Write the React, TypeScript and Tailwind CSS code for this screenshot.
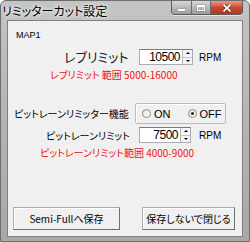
import React from 'react';

const jp = { fontFamily: '"Noto Sans CJK JP", sans-serif', fontFeatureSettings: '"palt"' };
const latin = { fontFamily: '"Liberation Sans", "Noto Sans CJK JP", sans-serif' };

function Spin({ value, width }: { value: string; width: string }) {
  return (
    <div className={`flex h-[16px] ${width} border border-[#abadb3] border-t-[#7a7a7a] bg-white`}>
      <div className="flex-1 whitespace-nowrap pr-[2px] text-right text-[12px] leading-[14px] tracking-[-0.5px] text-black" style={latin}>
        {value}
      </div>
      <div className="flex w-[10px] flex-col border-l border-[#b8b8b8] bg-[#f4f4f4]">
        <div className="flex flex-1 items-center justify-center border-b border-[#c8c8c8]">
          <div className="h-0 w-0 border-x-[2px] border-b-[2px] border-x-transparent border-b-black" />
        </div>
        <div className="flex flex-1 items-center justify-center">
          <div className="h-0 w-0 border-x-[2px] border-t-[2px] border-x-transparent border-t-black" />
        </div>
      </div>
    </div>
  );
}

function Radio({ checked }: { checked?: boolean }) {
  return (
    <div className="flex h-[9px] w-[9px] items-center justify-center rounded-full border border-[#8a8a8a] bg-gradient-to-br from-[#e0e0e0] to-white">
      {checked && <div className="h-[3px] w-[3px] rounded-full bg-[#222]" />}
    </div>
  );
}

function CaptionButtons() {
  return (
    <div className="mr-[6px] flex h-[14px] overflow-hidden rounded-b-[4px] border border-t-0 border-[#5a5a5a] shadow-[0_1px_0_rgba(255,255,255,0.6)]">
      <div className="flex w-[20px] items-center justify-center border-r border-[#6a6a6a] bg-gradient-to-b from-[#d8d8d8] to-[#9c9c9c]">
        <div className="mt-[4px] h-[2px] w-[7px] bg-white shadow-[0_0_1px_#333]" />
      </div>
      <div className="flex w-[19px] items-center justify-center border-r border-[#6a6a6a] bg-gradient-to-b from-[#d8d8d8] to-[#9c9c9c]">
        <div className="h-[6px] w-[8px] border-[1.5px] border-t-[2px] border-white shadow-[0_0_1px_#333]" />
      </div>
      <div className="flex w-[31px] items-center justify-center bg-gradient-to-b from-[#e89a88] via-[#c84a32] to-[#b8321c]">
        <svg width="10" height="8" viewBox="0 0 10 8">
          <path d="M1.5 0.5 L8.5 7.5 M8.5 0.5 L1.5 7.5" stroke="#5a1a10" strokeWidth="3" />
          <path d="M1.5 0.5 L8.5 7.5 M8.5 0.5 L1.5 7.5" stroke="#fff" strokeWidth="1.8" />
        </svg>
      </div>
    </div>
  );
}

export default function App() {
  return (
    <div className="flex h-[242px] w-[250px] flex-col overflow-hidden rounded-t-[6px] border border-[#6e6e6e] bg-gradient-to-b from-[#c4c4c4] via-[#b4b4b4] to-[#a8a8a8]">
      {/* title bar */}
      <div className="flex h-[19px] shrink-0 items-start justify-between">
        <div className="whitespace-nowrap pl-[1px] pt-[2px] text-[12px] leading-[15px] text-black [text-shadow:0_0_6px_#fff,0_0_3px_#fff]" style={jp}>
          リミッターカット設定
        </div>
        <CaptionButtons />
      </div>

      {/* client area */}
      <div className="mx-[6px] mb-[4px] flex flex-1 flex-col border border-[#808080] bg-[#f0f0f0] text-black">
        <div className="ml-[8px] mt-[9px] whitespace-nowrap text-[9px] leading-[10px]" style={latin}>
          MAP1
        </div>

        <div className="mt-[9px] flex items-center">
          <div className="ml-[56px] w-[75px] whitespace-nowrap text-[13px] leading-[16px] text-[#222]" style={jp}>
            レブリミット
          </div>
          <Spin value="10500" width="w-[54px]" />
          <div className="ml-[6px] whitespace-nowrap text-[10px]" style={latin}>RPM</div>
        </div>

        <div className="ml-[42px] mt-[3px] whitespace-nowrap text-[10px] leading-[13px] text-[#f01010]" style={jp}>
          レブリミット 範囲 5000-16000
        </div>

        <div className="mt-[22px] flex items-center">
          <div className="ml-[6px] w-[121px] whitespace-nowrap text-[10px] leading-[13px]" style={jp}>
            ピットレーンリミッター機能
          </div>
          <div className="flex h-[21px] w-[91px] items-center rounded-[2px] border border-[#bcbcbc] shadow-[inset_1px_1px_0_#fff]">
            <div className="ml-[6px] flex items-center gap-[3px]">
              <Radio />
              <span className="whitespace-nowrap text-[11px] leading-[14px]" style={latin}>ON</span>
            </div>
            <div className="ml-[17px] flex items-center gap-[3px]">
              <Radio checked />
              <span className="whitespace-nowrap text-[11px] leading-[14px]" style={latin}>OFF</span>
            </div>
          </div>
        </div>

        <div className="mt-[3px] flex items-center">
          <div className="ml-[38px] w-[93px] whitespace-nowrap text-[10px] leading-[13px]" style={jp}>
            ピットレーンリミット
          </div>
          <Spin value="7500" width="w-[52px]" />
          <div className="ml-[8px] whitespace-nowrap text-[10px]" style={latin}>RPM</div>
        </div>

        <div className="ml-[32px] mt-[3px] whitespace-nowrap text-[10px] leading-[13px] text-[#f01010]" style={jp}>
          ピットレーンリミット範囲 4000-9000
        </div>

        <div className="mb-[6px] mt-auto flex">
          <button className="ml-[5px] h-[23px] w-[107px] whitespace-nowrap border border-[#acacac] border-b-[#707070] border-r-[#707070] bg-[#f0f0f0] text-[10px] shadow-[inset_1px_1px_0_#fff]" style={jp}>
            Semi-Fullへ保存
          </button>
          <button className="ml-[22px] h-[23px] w-[93px] whitespace-nowrap border border-[#acacac] border-b-[#707070] border-r-[#707070] bg-[#f0f0f0] text-[10px] shadow-[inset_1px_1px_0_#fff]" style={jp}>
            保存しないで閉じる
          </button>
        </div>
      </div>
    </div>
  );
}
